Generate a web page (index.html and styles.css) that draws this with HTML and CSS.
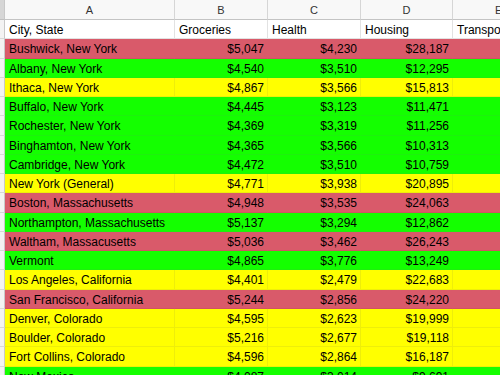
FILE: index.html
```html
<!DOCTYPE html>
<html>
<head>
<meta charset="utf-8">
<link rel="stylesheet" href="styles.css">
</head>
<body>
<div class="sheet">
  <div class="row colhead">
    <div class="rh corner"></div>
    <div class="c ch">A</div>
    <div class="c ch">B</div>
    <div class="c ch">C</div>
    <div class="c ch">D</div>
    <div class="c ch ch-e">E</div>
  </div>
  <div class="row">
    <div class="rh"></div>
    <div class="c">City, State</div>
    <div class="c">Groceries</div>
    <div class="c">Health</div>
    <div class="c">Housing</div>
    <div class="c">Transportation</div>
  </div>
  <div class="row red"><div class="rh"></div><div class="c">Bushwick, New York</div><div class="c n">$5,047</div><div class="c n">$4,230</div><div class="c n">$28,187</div><div class="c"></div></div>
  <div class="row green"><div class="rh"></div><div class="c">Albany, New York</div><div class="c n">$4,540</div><div class="c n">$3,510</div><div class="c n">$12,295</div><div class="c"></div></div>
  <div class="row yellow"><div class="rh"></div><div class="c">Ithaca, New York</div><div class="c n">$4,867</div><div class="c n">$3,566</div><div class="c n">$15,813</div><div class="c"></div></div>
  <div class="row green"><div class="rh"></div><div class="c">Buffalo, New York</div><div class="c n">$4,445</div><div class="c n">$3,123</div><div class="c n">$11,471</div><div class="c"></div></div>
  <div class="row green"><div class="rh"></div><div class="c">Rochester, New York</div><div class="c n">$4,369</div><div class="c n">$3,319</div><div class="c n">$11,256</div><div class="c"></div></div>
  <div class="row green"><div class="rh"></div><div class="c">Binghamton, New York</div><div class="c n">$4,365</div><div class="c n">$3,566</div><div class="c n">$10,313</div><div class="c"></div></div>
  <div class="row green"><div class="rh"></div><div class="c">Cambridge, New York</div><div class="c n">$4,472</div><div class="c n">$3,510</div><div class="c n">$10,759</div><div class="c"></div></div>
  <div class="row yellow"><div class="rh"></div><div class="c">New York (General)</div><div class="c n">$4,771</div><div class="c n">$3,938</div><div class="c n">$20,895</div><div class="c"></div></div>
  <div class="row red"><div class="rh"></div><div class="c">Boston, Massachusetts</div><div class="c n">$4,948</div><div class="c n">$3,535</div><div class="c n">$24,063</div><div class="c"></div></div>
  <div class="row green"><div class="rh"></div><div class="c">Northampton, Massachusetts</div><div class="c n">$5,137</div><div class="c n">$3,294</div><div class="c n">$12,862</div><div class="c"></div></div>
  <div class="row red"><div class="rh"></div><div class="c">Waltham, Massacusetts</div><div class="c n">$5,036</div><div class="c n">$3,462</div><div class="c n">$26,243</div><div class="c"></div></div>
  <div class="row green"><div class="rh"></div><div class="c">Vermont</div><div class="c n">$4,865</div><div class="c n">$3,776</div><div class="c n">$13,249</div><div class="c"></div></div>
  <div class="row yellow"><div class="rh"></div><div class="c">Los Angeles, California</div><div class="c n">$4,401</div><div class="c n">$2,479</div><div class="c n">$22,683</div><div class="c"></div></div>
  <div class="row red"><div class="rh"></div><div class="c">San Francisco, California</div><div class="c n">$5,244</div><div class="c n">$2,856</div><div class="c n">$24,220</div><div class="c"></div></div>
  <div class="row yellow"><div class="rh"></div><div class="c">Denver, Colorado</div><div class="c n">$4,595</div><div class="c n">$2,623</div><div class="c n">$19,999</div><div class="c"></div></div>
  <div class="row yellow"><div class="rh"></div><div class="c">Boulder, Colorado</div><div class="c n">$5,216</div><div class="c n">$2,677</div><div class="c n">$19,118</div><div class="c"></div></div>
  <div class="row yellow"><div class="rh"></div><div class="c">Fort Collins, Colorado</div><div class="c n">$4,596</div><div class="c n">$2,864</div><div class="c n">$16,187</div><div class="c"></div></div>
  <div class="row green"><div class="rh"></div><div class="c">New Mexico</div><div class="c n">$4,087</div><div class="c n">$3,014</div><div class="c n">$9,691</div><div class="c"></div></div>
</div>
</body>
</html>
```

FILE: styles.css
```css
html, body {
  margin: 0;
  padding: 0;
  background: #ffffff;
  overflow: hidden;
}
.sheet {
  width: 500px;
  height: 375px;
  overflow: hidden;
  font-family: "Liberation Sans", Arial, sans-serif;
  font-size: 12px;
  color: #000;
}
.row {
  display: grid;
  grid-template-columns: 5px 170px 93px 93px 92px 120px;
  height: 19.25px;
}
.c, .rh {
  box-sizing: border-box;
  border-right: 1px solid #e2e2e2;
  border-bottom: 1px solid #e2e2e2;
  padding: 2px 3px 0 4px;
  line-height: 16px;
  white-space: nowrap;
  overflow: hidden;
}
.rh {
  padding: 0;
  background: #f3f3f3;
  border-right: 1px solid #c8c8c8;
  border-bottom: 1px solid #d8d8d8;
}
.n {
  text-align: right;
}
.colhead {
  height: 20px;
}
.colhead .corner {
  background: #d6d6d6;
  border-bottom: 1px solid #c0c0c0;
}
.ch {
  background: #f8f8f8;
  color: #333;
  font-size: 11px;
  text-align: center;
  border-right: 1px solid #d6d6d6;
  border-bottom: 1px solid #c4c4c4;
  padding: 3px 0 0 0;
  line-height: 15px;
}
.ch-e {
  text-align: left;
  padding-left: 42px;
}
.red .c {
  background: #d95a6a;
  border-right-color: #d95a6a;
  border-bottom-color: #cf5363;
}
.green .c {
  background: #14ff00;
  border-right-color: #14ff00;
  border-bottom-color: #1ef00e;
}
.yellow .c {
  background: #ffff00;
  border-right-color: #eeee0a;
  border-bottom-color: #eeee0a;
}
```
